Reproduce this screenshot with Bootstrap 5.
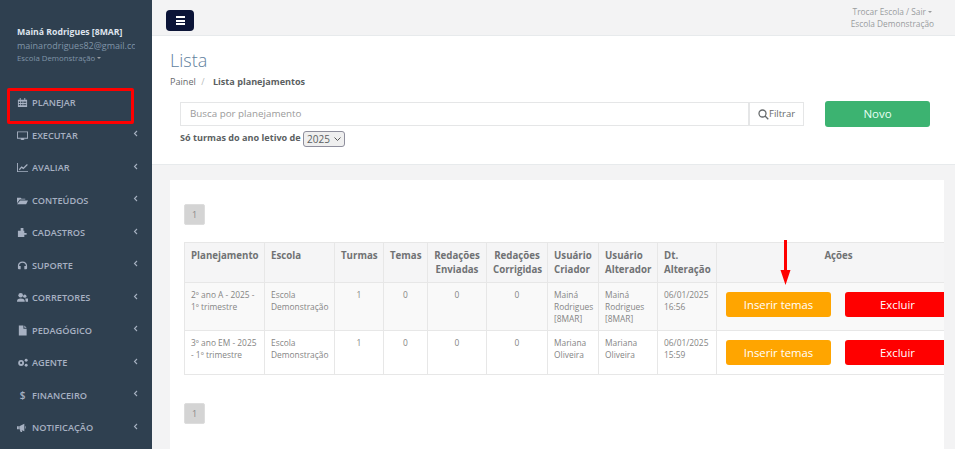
<!DOCTYPE html>
<html lang="pt-BR"><head><meta charset="utf-8"><title>Lista</title>
<link href="https://cdn.jsdelivr.net/npm/bootstrap@5.3.0/dist/css/bootstrap.min.css" rel="stylesheet">
<style>
html,body{height:449px;overflow:hidden}
body{font-family:"Open Sans",sans-serif;font-size:10px;color:#676a6c;background:#f3f3f4;line-height:1.42857}
.shell{height:449px;position:relative;overflow:hidden}
.sidebar{width:152px;background:#2f4050;color:#a7b1c2;flex:none;padding-top:25px;overflow:hidden}
.uname{font-size:8.7px;font-weight:700;color:#dfe4ed;padding-left:17px;line-height:14px;white-space:nowrap}
.umail{font-size:9px;color:#8095a8;padding-left:17px;line-height:14px;width:135px;overflow:hidden;white-space:nowrap}
.uschool{font-size:7.8px;color:#8095a8;padding-left:17px;line-height:11px}
.menu{margin-top:22.4px}
.mitem{height:32.5px;padding-left:17px;padding-right:14px;color:#a7b1c2;font-size:9.2px;font-weight:600;line-height:1}
.mitem svg.mi{width:11px;height:11px;margin-right:4px;flex:none;fill:#a7b1c2}
.mitem .chev{width:5px;height:7px;fill:none;stroke:#a7b1c2;stroke-width:1.1;margin-top:-3px}
.dollar{width:11px;margin-right:4px;text-align:center;font-size:10px}
.main{min-width:0;flex:1 1 auto}
.topbar{height:36px;background:#f3f3f4;border-bottom:1px solid #e7eaec;padding:0 21px 0 14px}
.burger{width:28px;height:21px;background:#0b1437;border-radius:4px;margin-top:10px}
.burger i{display:block;width:9px;height:2px;background:#fff;margin:.8px 0}
.toptext{font-size:8.3px;color:#999c9e;line-height:11.500px;text-align:center;padding-top:6px}
.caretx{display:inline-block;border-top:2px solid #999c9e;border-left:2px solid transparent;border-right:2px solid transparent;vertical-align:2px}
.heading{height:129px;background:#fff;border-bottom:1px solid #e7eaec;padding:12px 18px 0}
.heading h2{font-size:18px;font-weight:300;color:#5f7f9d;margin:0;line-height:24px}
.crumb{font-size:9.100px;line-height:12px;margin-top:4px;color:#676a6c}
.crumb b{font-weight:700;color:#5b5f62;margin-left:6px}
.crumb span{color:#b9bbbc;margin-left:3px}
.searchrow{margin-top:13px;padding-left:10px}
.sbox{width:569px;height:24px;border:1px solid #e5e6e7;font-size:9.800px;color:#9a9a9a;padding:0 9px;line-height:22px}
.fbtn{width:55px;height:24px;border:1px solid #e5e6e7;font-size:9.500px;color:#676a6c;line-height:22px;padding-left:8px}
.newbtn{width:105px;height:26px;background:#3cb371;color:#e8fff4;border:0;border-radius:3px;font-size:11.5px;margin-left:21px;padding:0;line-height:26px}
.yearrow{padding-left:10px;margin-top:2px;font-size:9.100px;font-weight:700;color:#5b5f62;line-height:18px}
.yearsel{display:inline-flex;align-items:center;gap:4px;width:42px;height:16px;border:1px solid #8f8f9d;border-radius:3px;background:#efefef;font-size:10px;font-weight:400;padding-left:3px;vertical-align:middle;color:#5b5f62}
.content{padding:15px 11px 0 18px}
.panel{background:#fff;height:300px;padding:24px 0 0 14px;overflow:hidden}
.pg{width:21px;height:21px;background:#d4d4d4;border:1px solid #ddd;border-radius:2px;font-size:9px;color:#888;text-align:center;line-height:19px}
.gridtable{table-layout:fixed;width:776px;border-collapse:collapse;margin:17px 0 28px;font-size:8.4px;color:#858585}
.gridtable th,.gridtable td{border:1px solid #e7e7e7;padding:6px 6px 0;vertical-align:top;line-height:12px}
.gridtable th{font-size:9.700px;font-weight:700;color:#707274;background:#f5f5f6;line-height:14px;height:40px}
.gridtable tr.oddr td{background:#f9f9f9}
.gridtable tr.r1 td{height:48px}.gridtable tr.r2 td{height:44px}
.gridtable .ct{text-align:center}
.gridtable td.acts{padding:9px 0 0 9px;white-space:nowrap}
.abt{display:inline-block;width:105px;height:25px;border-radius:3px;color:#fff;font-size:11.300px;text-align:center;line-height:25px}
.abt.o{background:#ffa500}.abt.r{background:#f00;margin-left:14px}
.redbox{position:absolute;left:7px;top:88px;width:127px;height:36px;border:3px solid #f00;border-radius:2px}
.arrow{position:absolute;left:780px;top:240px;width:11px;height:45px}
</style></head><body>
<div class="shell d-flex">
<nav class="sidebar">
<div class="uname">Mainá Rodrigues [8MAR]</div>
<div class="umail">mainarodrigues82@gmail.com</div>
<div class="uschool">Escola Demonstração <span class="caretx"></span></div>
<div class="menu">
<div class="mitem d-flex align-items-center justify-content-between"><div class="d-flex align-items-center"><svg class="mi" viewBox="0 0 12 12"><path d="M1 3h10v8H1zM3 1h1v2H3zM8 1h1v2H8zM2 5v1.500h1.500V5zm2.500 0v1.500H6V5zM7 5v1.500h1.500V5zm2 0v1.500h1V5zM2 7.500V9h1.500V7.500zm2.500 0V9H6V7.500zm2.500 0V9h1.500V7.500zm2 0V9h1V7.500z" fill-rule="evenodd"/></svg>PLANEJAR</div></div>
<div class="mitem d-flex align-items-center justify-content-between"><div class="d-flex align-items-center"><svg class="mi" viewBox="0 0 12 12"><path d="M0 1.500h12V9.500H7.500V10.500H9V11H3V10.500H4.500V9.500H0zM1 2.500V8.500H11V2.500z" fill-rule="evenodd"/></svg>EXECUTAR</div><svg class="chev" viewBox="0 0 5 7"><path d="M4 1 1.500 3.500 4 6"/></svg></div>
<div class="mitem d-flex align-items-center justify-content-between"><div class="d-flex align-items-center"><svg class="mi" viewBox="0 0 12 12"><path d="M0 1h1v9h11v1H0zM2 8l3-3.500 2 1.500 3.500-3.500L12 3 7 8 5 6.500 3 9z"/></svg>AVALIAR</div><svg class="chev" viewBox="0 0 5 7"><path d="M4 1 1.500 3.500 4 6"/></svg></div>
<div class="mitem d-flex align-items-center justify-content-between"><div class="d-flex align-items-center"><svg class="mi" viewBox="0 0 12 12"><path d="M0 3h4l1 1h4v1H3L0 9zM3.500 6H12l-2 4H0z"/></svg>CONTEÚDOS</div><svg class="chev" viewBox="0 0 5 7"><path d="M4 1 1.500 3.500 4 6"/></svg></div>
<div class="mitem d-flex align-items-center justify-content-between"><div class="d-flex align-items-center"><svg class="mi" viewBox="0 0 12 12"><path d="M4 1h3v3h1V6.500h2.500v2H8V11H1V4h3z"/></svg>CADASTROS</div><svg class="chev" viewBox="0 0 5 7"><path d="M4 1 1.500 3.500 4 6"/></svg></div>
<div class="mitem d-flex align-items-center justify-content-between"><div class="d-flex align-items-center"><svg class="mi" viewBox="0 0 12 12"><path d="M6 1.500c-3 0-5 2-5 4.500v3c0 .8.700 1.200 1.500 1.200H4V6.500H2.300C2.500 4.300 4 3 6 3s3.500 1.300 3.700 3.500H8v3.700h1.500c.8 0 1.500-.4 1.500-1.200V6c0-2.500-2-4.500-5-4.500z"/></svg>SUPORTE</div><svg class="chev" viewBox="0 0 5 7"><path d="M4 1 1.500 3.500 4 6"/></svg></div>
<div class="mitem d-flex align-items-center justify-content-between"><div class="d-flex align-items-center"><svg class="mi" viewBox="0 0 12 12"><circle cx="4" cy="3.500" r="2.500"/><path d="M0 10.500c0-2.500 1-3.500 4-3.500s4.500 1 4.500 3.500z"/><circle cx="8.500" cy="4.500" r="1.800"/><path d="M9 7h3v3.500H9.500z"/></svg>CORRETORES</div><svg class="chev" viewBox="0 0 5 7"><path d="M4 1 1.500 3.500 4 6"/></svg></div>
<div class="mitem d-flex align-items-center justify-content-between"><div class="d-flex align-items-center"><svg class="mi" viewBox="0 0 12 12"><path d="M2 .5h5V4h3.500v7.500H2zM8 .5 10.500 3H8z"/></svg>PEDAGÓGICO</div><svg class="chev" viewBox="0 0 5 7"><path d="M4 1 1.500 3.500 4 6"/></svg></div>
<div class="mitem d-flex align-items-center justify-content-between"><div class="d-flex align-items-center"><svg class="mi" viewBox="0 0 12 12"><circle cx="4.500" cy="6.500" r="3.200"/><circle cx="4.500" cy="6.500" r="1.200" fill="#2f4050"/><circle cx="10" cy="3.500" r="1.600"/><circle cx="10" cy="9" r="1.600"/></svg>AGENTE</div><svg class="chev" viewBox="0 0 5 7"><path d="M4 1 1.500 3.500 4 6"/></svg></div>
<div class="mitem d-flex align-items-center justify-content-between"><div class="d-flex align-items-center"><span class="dollar">$</span>FINANCEIRO</div><svg class="chev" viewBox="0 0 5 7"><path d="M4 1 1.500 3.500 4 6"/></svg></div>
<div class="mitem d-flex align-items-center justify-content-between"><div class="d-flex align-items-center"><svg class="mi" viewBox="0 0 12 12"><path d="M0 4.500h2V8H0zM2.500 4.500 8 2v8L2.500 8zM3 8.500h2l.7 2.500H4zM9 4c1 .5 1 3 0 3.500z"/></svg>NOTIFICAÇÃO</div><svg class="chev" viewBox="0 0 5 7"><path d="M4 1 1.500 3.500 4 6"/></svg></div>
</div>
</nav>
<main class="main">
<div class="topbar d-flex justify-content-between">
<div class="burger d-flex flex-column align-items-center justify-content-center"><i></i><i></i><i></i></div>
<div class="toptext">Trocar Escola / Sair <span class="caretx"></span><br>Escola Demonstração</div>
</div>
<div class="heading">
<h2>Lista</h2>
<div class="crumb">Painel <span>/</span> <b>Lista planejamentos</b></div>
<div class="searchrow d-flex align-items-center">
<div class="sbox">Busca por planejamento</div>
<div class="fbtn d-flex align-items-center"><svg width="11" height="11" viewBox="0 0 11 11" fill="none" stroke="#676a6c" stroke-width="1.300"><circle cx="4.500" cy="4.500" r="3.500"/><path d="M7 7l3.300 3.300"/></svg>Filtrar</div>
<button class="btn newbtn">Novo</button>
</div>
<div class="yearrow">Só turmas do ano letivo de <span class="yearsel">2025 <svg width="7" height="4" viewBox="0 0 7 4" fill="none" stroke="#555" stroke-width="1"><path d="M.5.500 3.500 3.500 6.500.5"/></svg></span></div>
</div>
<div class="content">
<div class="panel">
<div class="pg">1</div>
<table class="gridtable">
<colgroup><col style="width:80px"><col style="width:70px"><col style="width:49px"><col style="width:44px"><col style="width:59px"><col style="width:61px"><col style="width:51px"><col style="width:59px"><col style="width:59px"><col style="width:244px"></colgroup>
<thead><tr><th>Planejamento</th><th>Escola</th><th class="ct">Turmas</th><th class="ct">Temas</th><th class="ct">Redações Enviadas</th><th class="ct">Redações Corrigidas</th><th>Usuário Criador</th><th>Usuário Alterador</th><th>Dt. Alteração</th><th class="ct">Ações</th></tr></thead>
<tbody>
<tr class="r1 oddr"><td>2º ano A - 2025 - 1º trimestre</td><td>Escola Demonstração</td><td class="ct">1</td><td class="ct">0</td><td class="ct">0</td><td class="ct">0</td><td>Mainá Rodrigues [8MAR]</td><td>Mainá Rodrigues [8MAR]</td><td>06/01/2025 16:56</td><td class="acts"><span class="abt o">Inserir temas</span><span class="abt r">Excluir</span></td></tr>
<tr class="r2"><td>3º ano EM - 2025 - 1º trimestre</td><td>Escola Demonstração</td><td class="ct">1</td><td class="ct">0</td><td class="ct">0</td><td class="ct">0</td><td>Mariana Oliveira</td><td>Mariana Oliveira</td><td>06/01/2025 15:59</td><td class="acts"><span class="abt o">Inserir temas</span><span class="abt r">Excluir</span></td></tr>
</tbody></table>
<div class="pg">1</div>
</div>
</div>
</main>
<div class="redbox"></div>
<svg class="arrow" viewBox="0 0 11 45"><path d="M4 0h3v30h3.500L5.500 45 .5 30H4z" fill="#f00"/></svg>
</div>
</body></html>
